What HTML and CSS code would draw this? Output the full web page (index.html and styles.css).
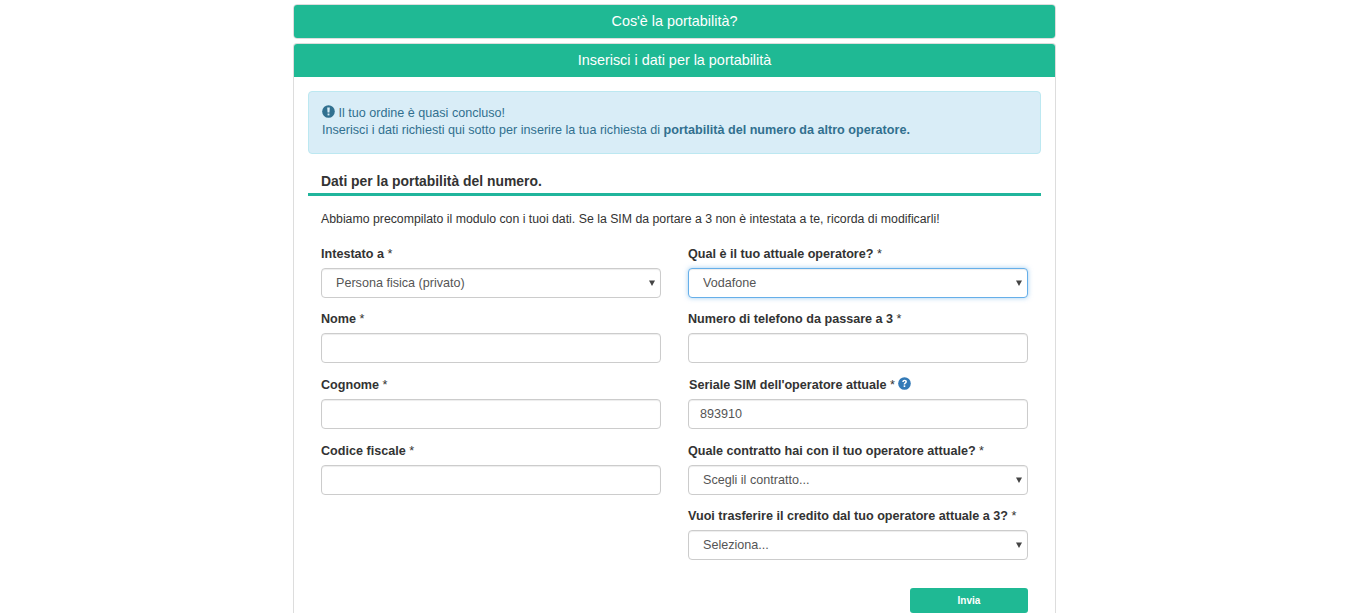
FILE: index.html
```html
<!DOCTYPE html>
<html lang="it">
<head>
<meta charset="utf-8">
<title>Portabilità</title>
<link rel="stylesheet" href="styles.css">
</head>
<body>
<main class="wrap">
  <section class="panel panel-closed">
    <h2 class="panel-heading">Cos'è la portabilità?</h2>
  </section>
  <section class="panel panel-open">
    <h2 class="panel-heading">Inserisci i dati per la portabilità</h2>
    <div class="panel-body">
      <div class="alert">
        <svg class="icon" viewBox="0 0 14 14" aria-hidden="true"><circle cx="7" cy="7" r="6.8" fill="#31708f"/><path d="M5.6 2.6h2.8L8 8.2H6z" fill="#d9edf7"/><rect x="6" y="9.2" width="2" height="2" fill="#d9edf7"/></svg>
        Il tuo ordine è quasi concluso!<br>
        Inserisci i dati richiesti qui sotto per inserire la tua richiesta di <strong>portabilità del numero da altro operatore.</strong>
      </div>
      <h3 class="section-title">Dati per la portabilità del numero.</h3>
      <p class="intro">Abbiamo precompilato il modulo con i tuoi dati. Se la SIM da portare a 3 non è intestata a te, ricorda di modificarli!</p>
      <form class="columns">
        <div class="column">
          <div class="field">
            <label>Intestato a <span class="req">*</span></label>
            <div class="select-wrap">
              <select class="control"><option>Persona fisica (privato)</option></select>
              <svg class="caret" viewBox="0 0 7 7" aria-hidden="true"><path d="M0 .5h7L3.5 7z"/></svg>
            </div>
          </div>
          <div class="field">
            <label>Nome <span class="req">*</span></label>
            <input class="control" type="text">
          </div>
          <div class="field">
            <label>Cognome <span class="req">*</span></label>
            <input class="control" type="text">
          </div>
          <div class="field">
            <label>Codice fiscale <span class="req">*</span></label>
            <input class="control" type="text">
          </div>
        </div>
        <div class="column">
          <div class="field">
            <label>Qual è il tuo attuale operatore? <span class="req">*</span></label>
            <div class="select-wrap">
              <select class="control control-focus"><option>Vodafone</option></select>
              <svg class="caret" viewBox="0 0 7 7" aria-hidden="true"><path d="M0 .5h7L3.5 7z"/></svg>
            </div>
          </div>
          <div class="field">
            <label>Numero di telefono da passare a 3 <span class="req">*</span></label>
            <input class="control" type="text">
          </div>
          <div class="field">
            <label class="label-sim">Seriale SIM dell'operatore attuale <span class="req">*</span>
              <svg class="icon icon-help" viewBox="0 0 14 14" aria-hidden="true"><circle cx="7" cy="7" r="6.8" fill="#337ab7"/><path d="M4.6 5.4C4.7 3.9 5.7 3 7.2 3c1.4 0 2.4.8 2.4 2 0 1-.6 1.5-1.2 1.9-.5.3-.7.6-.7 1.2H6.1c0-1 .3-1.6 1-2 .5-.3.8-.6.8-1 0-.5-.3-.8-.8-.8s-.9.4-.9 1.1z" fill="#fff"/><rect x="6.1" y="9" width="1.7" height="1.8" fill="#fff"/></svg>
            </label>
            <input class="control" type="text" value="893910">
          </div>
          <div class="field">
            <label>Quale contratto hai con il tuo operatore attuale? <span class="req">*</span></label>
            <div class="select-wrap">
              <select class="control"><option>Scegli il contratto...</option></select>
              <svg class="caret" viewBox="0 0 7 7" aria-hidden="true"><path d="M0 .5h7L3.5 7z"/></svg>
            </div>
          </div>
          <div class="field">
            <label>Vuoi trasferire il credito dal tuo operatore attuale a 3? <span class="req">*</span></label>
            <div class="select-wrap">
              <select class="control"><option>Seleziona...</option></select>
              <svg class="caret" viewBox="0 0 7 7" aria-hidden="true"><path d="M0 .5h7L3.5 7z"/></svg>
            </div>
          </div>
          <div class="actions">
            <button class="submit" type="button">Invia</button>
          </div>
        </div>
      </form>
    </div>
  </section>
</main>
</body>
</html>
```
FILE: styles.css
```css
* { box-sizing: border-box; }
html, body { height: 100%; }
body {
  margin: 0;
  overflow: hidden;
  background: #fff;
  color: #333;
  font-family: "Liberation Sans", Arial, sans-serif;
  font-size: 14px;
  line-height: 20px;
}
.wrap { width: 763px; margin: 4px 0 0 293px; }
.panel {
  border: 1px solid #ddd;
  border-radius: 4px;
  margin-bottom: 4px;
  background: #fff;
}
.panel-open {
  margin-bottom: 0;
  border-bottom: 0;
  border-radius: 4px 4px 0 0;
}
.panel-heading {
  margin: 0;
  height: 33px;
  background: #1fb994;
  color: #fff;
  border-radius: 3px 3px 0 0;
  font-size: 14.4px;
  font-weight: 400;
  line-height: 33px;
  text-align: center;
}
.panel-closed .panel-heading { border-radius: 3px; }
.panel-body { padding: 14px 14px 0; }
.alert {
  height: 63px;
  padding: 12.6px 13px;
  background: #d9edf7;
  border: 1px solid #bce8f1;
  border-radius: 4px;
  color: #31708f;
  font-size: 12.6px;
  line-height: 17px;
}
.icon { display: inline-block; width: 13px; height: 13px; vertical-align: -1px; }
.alert .icon { vertical-align: -1px; margin-top: -2px; }
.section-title {
  margin: 18px 0 0;
  padding: 0 13px 3px;
  height: 24px;
  border-bottom: 3px solid #20b59c;
  font-size: 13.9px;
  line-height: 19.6px;
  font-weight: 700;
}
.intro { margin: 13px 13px 0; font-size: 12.3px; line-height: 20px; }
.columns {
  display: grid;
  grid-template-columns: 340px 340px;
  column-gap: 27px;
  padding: 0 13px;
  margin-top: 14.8px;
}
.field { margin-bottom: 11.6px; }
label {
  display: block;
  height: 20px;
  margin-bottom: 4px;
  font-size: 12.6px;
  font-weight: 700;
  line-height: 20.6px;
}
.req { font-weight: 400; }
.label-sim { padding-left: 1px; }
.icon-help { vertical-align: -1px; margin-left: 0; }
.control {
  display: block;
  width: 100%;
  height: 30px;
  padding: 0 14px;
  border: 1px solid #ccc;
  border-radius: 4px;
  background: #fff;
  color: #555;
  font-family: inherit;
  font-size: 12.6px;
  box-shadow: inset 0 1px 1px rgba(0,0,0,.075);
  appearance: none;
  outline: 0;
}
input.control { padding: 0 11px; }
.control-focus {
  border-color: #66afe9;
  box-shadow: inset 0 1px 1px rgba(0,0,0,.075), 0 0 5px rgba(102,175,233,.6);
}
.select-wrap { position: relative; }
.caret {
  position: absolute;
  right: 6px;
  top: 12px;
  width: 6px;
  height: 6px;
  fill: #444;
}
.actions { display: flex; justify-content: flex-end; margin-top: 27.4px; }
.submit {
  width: 118px;
  height: 25px;
  border: 0;
  border-radius: 3px;
  background: #1fb994;
  color: #fff;
  font-family: inherit;
  font-size: 10px;
  font-weight: 700;
}
```
